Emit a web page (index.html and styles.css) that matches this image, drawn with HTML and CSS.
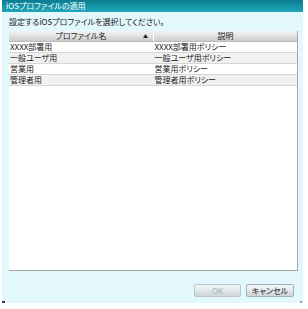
FILE: index.html
```html
<!DOCTYPE html>
<html lang="ja">
<head>
    <meta charset="UTF-8">
    <title>iOSプロファイルの適用</title>
    <link rel="stylesheet" href="styles.css">
</head>
<body>
    <div class="dialog">
        <div class="titlebar">iOSプロファイルの適用</div>
        <div class="dialog-body">
            <p class="prompt">設定するiOSプロファイルを選択してください。</p>
            <div class="grid">
                <table>
                    <thead>
                        <tr>
                            <th class="sorted">プロファイル名<span class="sort-arrow">▲</span></th>
                            <th>説明</th>
                        </tr>
                    </thead>
                    <tbody>
                        <tr><td>XXXX部署用</td><td>XXXX部署用ポリシー</td></tr>
                        <tr><td>一般ユーザ用</td><td>一般ユーザ用ポリシー</td></tr>
                        <tr><td>営業用</td><td>営業用ポリシー</td></tr>
                        <tr><td>管理者用</td><td>管理者用ポリシー</td></tr>
                    </tbody>
                </table>
            </div>
            <div class="actions">
                <button class="btn" disabled>OK</button>
                <button class="btn">キャンセル</button>
            </div>
        </div>
    </div>
</body>
</html>
```

FILE: styles.css
```css
body {
    margin: 0;
    background-color: #ffffff;
    font-family: "Noto Sans CJK JP", sans-serif;
    font-size: 8px;
    font-feature-settings: "palt";
    color: #1a1a1a;
}
.dialog {
    position: relative;
    margin-left: 2px;
    width: 301px;
    height: 303px;
    display: flex;
    flex-direction: column;
    background-color: #e3f8fd;
}
/* little grip marks in the bottom corners */
.dialog::before, .dialog::after {
    content: "";
    position: absolute;
    bottom: 0;
    width: 3px;
    height: 2px;
    background-color: #3a3a3a;
}
.dialog::before {
    left: 0;
}
.dialog::after {
    right: 1px;
    width: 2px;
    background-color: #8a9aa0;
}
.titlebar {
    height: 12px;
    line-height: 12px;
    padding-left: 4px;
    color: #ffffff;
    background: linear-gradient(#0a7d90, #1797aa 60%, #22a6b6);
}
.dialog-body {
    flex: 1;
    display: flex;
    flex-direction: column;
    padding: 0 5px 0 7px;
}
.prompt {
    margin: 0;
    height: 19px;
    line-height: 19px;
}
.grid {
    height: 239px;
    background-color: #ffffff;
    border-right: 1px solid #a8a8a8;
    border-bottom: 1px solid #a8a8a8;
}
table {
    width: 100%;
    border-collapse: collapse;
    table-layout: fixed;
}
th {
    position: relative;
    height: 10px;
    padding: 0;
    font-weight: normal;
    line-height: 10px;
    text-align: center;
    background: linear-gradient(#f2f2f2, #e2e2e2 50%, #cacaca);
    border-bottom: 1px solid #bdbdbd;
}
th.sorted {
    width: 144px;
    border-right: 1px solid #ffffff;
}
.sort-arrow {
    position: absolute;
    right: 5px;
    top: 0;
    font-size: 5px;
}
td {
    height: 10px;
    padding: 0 0 0 1px;
    line-height: 10px;
    white-space: nowrap;
    border-bottom: 1px solid #d6d6d6;
}
tbody tr:nth-child(even) td {
    background-color: #f1f1f1;
}
.actions {
    display: flex;
    justify-content: flex-end;
    gap: 5px;
    padding: 13px 4px 0 0;
}
.btn {
    width: 48px;
    height: 13px;
    padding: 0;
    font-family: inherit;
    font-size: 8px;
    font-feature-settings: "palt";
    line-height: 11px;
    color: #1a1a1a;
    border: 1px solid #9fb0ba;
    border-radius: 2px;
    background: linear-gradient(#f6f8f9, #dfe5e8 55%, #ccd5da);
}
.btn:disabled {
    width: 47px;
    color: #a9b3b8;
    border-color: #b9c6cd;
}
```
